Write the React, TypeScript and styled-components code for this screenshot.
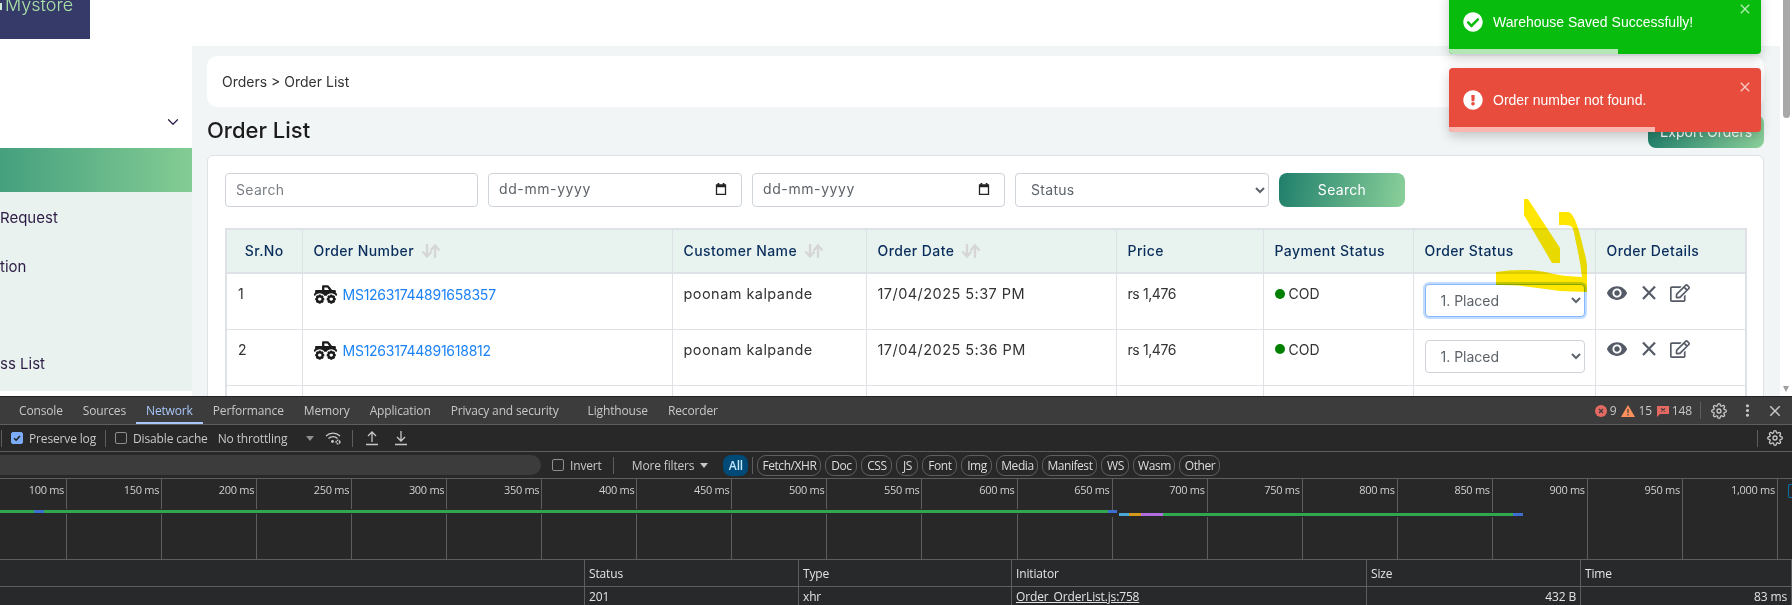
import styled, { createGlobalStyle } from 'styled-components';
import { FaRegEdit, FaTruckMonster, FaCheckCircle, FaExclamationCircle } from 'react-icons/fa';
import { FiChevronDown, FiSettings } from 'react-icons/fi';
import { MdClose, MdRemoveRedEye, MdMoreVert } from 'react-icons/md';

const GlobalStyle = createGlobalStyle`
	html, body {
		margin: 0;
		padding: 0;
		height: 605px;
		overflow: hidden;
		background: #fff;
		font-family: 'Inter', 'Noto Sans', sans-serif;
	}
	* {
		box-sizing: border-box;
	}
`;

const tickLabels = ['100 ms', '150 ms', '200 ms', '250 ms', '300 ms', '350 ms', '400 ms', '450 ms', '500 ms', '550 ms', '600 ms', '650 ms', '700 ms', '750 ms', '800 ms', '850 ms', '900 ms', '950 ms', '1,000 ms'];
const filterPills = [
	{ label: 'Fetch/XHR', width: 64 },
	{ label: 'Doc', width: 32 },
	{ label: 'CSS', width: 31 },
	{ label: 'JS', width: 22 },
	{ label: 'Font', width: 35 },
	{ label: 'Img', width: 31 },
	{ label: 'Media', width: 42 },
	{ label: 'Manifest', width: 55 },
	{ label: 'WS', width: 28 },
	{ label: 'Wasm', width: 42 },
	{ label: 'Other', width: 41 },
];
const tabs = ['Console', 'Sources', 'Network', 'Performance', 'Memory', 'Application', 'Privacy and security', 'Lighthouse', 'Recorder'];

const orders = [
	{ no: 1, number: 'MS12631744891658357', date: '17/04/2025 5:37 PM', focused: true },
	{ no: 2, number: 'MS12631744891618812', date: '17/04/2025 5:36 PM', focused: false },
	{ no: 3, number: '', date: '', focused: false },
];

const SortArrows = () => (
	<SortIcon viewBox="0 0 20 14" width="20" height="14" fill="none" stroke="#d6d6d6" strokeWidth="2.300">
		<path d="M6 0v12M1.500 7.500 6 12.500l4.500-5" />
		<path d="M14 14V2M9.500 6.500 14 1.500l4.500 5" />
	</SortIcon>
);

const CalendarIcon = () => (
	<svg viewBox="0 0 14 14" width="12" height="12" fill="#222">
		<path d="M3 0h2v1.500h4V0h2v1.500h2V14H1V1.500h2zM2.500 5v7.500h9V5z" />
	</svg>
);

const GearIcon = () => <FiSettings size={16} />;

const App = () => {
	return (
		<Page>
			<GlobalStyle />
			<Viewport>
				<Site>
					<Header>
						<Logo>
							<LogoMark />
							<LogoText>Mystore</LogoText>
						</Logo>
					</Header>
					<Body>
						<Sidebar>
							<ParentItem>
								<FiChevronDown size={18} strokeWidth={1.6} />
							</ParentItem>
							<ActiveItem />
							<SubMenu>
								<SubItem>Request</SubItem>
								<SubItem>tion</SubItem>
								<SubItem />
								<SubItem>ss List</SubItem>
							</SubMenu>
						</Sidebar>
						<Main>
							<Breadcrumb>Orders &gt; Order List</Breadcrumb>
							<TitleRow>
								<Title>Order List</Title>
								<ExportButton>Export Orders</ExportButton>
							</TitleRow>
							<Card>
								<Filters>
									<SearchInput placeholder="Search" />
									<DateField>
										dd-mm-yyyy
										<CalendarIcon />
									</DateField>
									<DateField>
										dd-mm-yyyy
										<CalendarIcon />
									</DateField>
									<StatusSelect defaultValue="Status">
										<option>Status</option>
									</StatusSelect>
									<SearchButton>Search</SearchButton>
								</Filters>
								<Table>
									<colgroup>
										<col width="76" />
										<col width="370" />
										<col width="194" />
										<col width="250" />
										<col width="147" />
										<col width="150" />
										<col width="182" />
										<col width="151" />
									</colgroup>
									<thead>
										<tr>
											<HeadCell $center>Sr.No</HeadCell>
											<HeadCell>Order Number<SortArrows /></HeadCell>
											<HeadCell>Customer Name<SortArrows /></HeadCell>
											<HeadCell>Order Date<SortArrows /></HeadCell>
											<HeadCell>Price</HeadCell>
											<HeadCell>Payment Status</HeadCell>
											<HeadCell>Order Status</HeadCell>
											<HeadCell>Order Details</HeadCell>
										</tr>
									</thead>
									<tbody>
										{orders.map((order) => (
											<tr key={order.no}>
												<Cell>{order.number && order.no}</Cell>
												<Cell>
													{order.number && (
														<OrderLink>
															<FaTruckMonster size={23} color="#1b1b1b" />
															{order.number}
														</OrderLink>
													)}
												</Cell>
												<TextCell>{order.number && 'poonam kalpande'}</TextCell>
												<TextCell>{order.date}</TextCell>
												<Cell $spacing={-0.4}>{order.number && 'rs 1,476'}</Cell>
												<Cell>
													{order.number && (
														<Payment>
															<Dot />
															COD
														</Payment>
													)}
												</Cell>
												<SelectCell>
													<RowSelect $focused={order.focused} defaultValue="1. Placed">
														<option>1. Placed</option>
													</RowSelect>
												</SelectCell>
												<Cell>
													{order.number && (
														<Actions>
															<MdRemoveRedEye size={22} />
															<svg viewBox="0 0 22 22" width="22" height="22" fill="none" stroke="currentColor" strokeWidth="2.200">
																<path d="M5 4.500l12 12.500M17 4.500 5 17" />
															</svg>
															<FaRegEdit size={20} />
														</Actions>
													)}
												</Cell>
											</tr>
										))}
									</tbody>
								</Table>
							</Card>
						</Main>
					</Body>
				</Site>
				<PageScrollbar>
					<ScrollThumb />
					<ScrollArrow />
				</PageScrollbar>
				<Marker viewBox="0 0 1792 396" width="1792" height="396">
					<path d="M1524 199h4l32 49v15h-8l-28-48z" />
					<path d="M1496 272C1510 270 1520 270 1530 270C1545 271 1555 275 1567 276L1582 277C1581 267 1579 257 1577 247C1575 238 1574 230 1572 227C1570 225 1565 225 1559 225L1559 212L1568 212C1571 212 1573 216 1575 220C1578 227 1581 237 1583 247C1585 254 1587 262 1587 267L1587 292L1560 291L1530 287C1518 285 1506 285 1496 285Z" />
				</Marker>
				<Toasts>
					<Toast $color="#07bc0c">
						<FaCheckCircle size={20} />
						Warehouse Saved Successfully!
						<ToastClose><MdClose size={16} /></ToastClose>
						<ToastProgress $color="#b5e6b6" $width={169} />
					</Toast>
					<Toast $color="#e74c3c">
						<FaExclamationCircle size={20} />
						Order number not found.
						<ToastClose><MdClose size={16} /></ToastClose>
						<ToastProgress $color="#f8b7b1" $width={206} />
					</Toast>
				</Toasts>
			</Viewport>
			<DevTools>
				<TabBar>
					{tabs.map((tab) => (
						<Tab key={tab} $active={tab === 'Network'}>{tab}</Tab>
					))}
					<TabBarRight>
						<Counters>
							<Counter>
								<svg viewBox="0 0 12 12" width="12" height="12">
									<circle cx="6" cy="6" r="6" fill="#e46962" />
									<path d="M4 4l4 4M8 4l-4 4" stroke="#3c3c3c" strokeWidth="1.300" />
								</svg>
								9
							</Counter>
							<Counter>
								<svg viewBox="0 0 14 12" width="14" height="12">
									<path d="M7 0l7 12H0z" fill="#ff8f5c" />
									<path d="M7 4v4M7 9v1.500" stroke="#3c3c3c" strokeWidth="1.200" />
								</svg>
								15
							</Counter>
							<Counter>
								<svg viewBox="0 0 12 12" width="12" height="12">
									<path d="M0 1h12v8H3l-3 3z" fill="#e46962" />
									<path d="M4 3.500l4 3M8 3.500l-4 3" stroke="#3c3c3c" strokeWidth="1.100" />
								</svg>
								148
							</Counter>
						</Counters>
						<BarSeparator />
						<ToolIcon><GearIcon /></ToolIcon>
						<ToolIcon><MdMoreVert size={19} /></ToolIcon>
						<ToolIcon><MdClose size={18} /></ToolIcon>
					</TabBarRight>
				</TabBar>
				<Toolbar>
					<BarSeparator />
					<CheckRow>
						<Checkbox $checked>
							<svg viewBox="0 0 12 12" width="12" height="12" fill="none" stroke="#1f1f1f" strokeWidth="1.800">
								<path d="M2.500 6.200l2.500 2.500 4.500-5.200" />
							</svg>
						</Checkbox>
						Preserve log
					</CheckRow>
					<BarSeparator />
					<CheckRow>
						<Checkbox />
						Disable cache
					</CheckRow>
					<Throttle>No throttling</Throttle>
					<Caret />
					<ToolIcon>
						<svg viewBox="0 0 17 14" width="17" height="14" fill="none" stroke="currentColor" strokeWidth="1.300">
							<path d="M1 5a10 10 0 0 1 14 0" />
							<path d="M3.500 7.500a6.500 6.500 0 0 1 9 0" />
							<circle cx="7.500" cy="10.500" r="0.800" fill="currentColor" />
							<circle cx="13" cy="11" r="1.800" strokeWidth="1.600" strokeDasharray="1.500 0.700" />
						</svg>
					</ToolIcon>
					<BarSeparator />
					<ToolIcon>
						<svg viewBox="0 0 16 16" width="16" height="16" fill="none" stroke="currentColor" strokeWidth="1.300">
							<path d="M8 2v10M4 6l4-4 4 4M2 14.500h12" />
						</svg>
					</ToolIcon>
					<ToolIcon>
						<svg viewBox="0 0 16 16" width="16" height="16" fill="none" stroke="currentColor" strokeWidth="1.300">
							<path d="M8 1v10M4 7l4 4 4-4M2 14.500h12" />
						</svg>
					</ToolIcon>
					<ToolbarEnd>
						<BarSeparator />
						<ToolIcon><GearIcon /></ToolIcon>
					</ToolbarEnd>
				</Toolbar>
				<FilterBar>
					<FilterInput />
					<CheckRow>
						<Checkbox />
						Invert
					</CheckRow>
					<BarSeparator />
					<MoreFilters>
						More filters
						<FilterCaret />
					</MoreFilters>
					<AllPill>All</AllPill>
					<PillSeparator />
					<Pills>
						{filterPills.map((pill) => (
							<Pill key={pill.label} $width={pill.width}>{pill.label}</Pill>
						))}
					</Pills>
				</FilterBar>
				<Overview>
					<Tick $first />
					{tickLabels.map((label) => (
						<Tick key={label}>{label}</Tick>
					))}
					<Waterfall viewBox="0 0 1792 81" width="1792" height="81">
						<rect x="0" y="30" width="1110" height="5" fill="#282828" />
						<rect x="1110" y="33" width="420" height="5" fill="#282828" />
						<rect x="0" y="31" width="1108" height="3" fill="#2fa84f" />
						<rect x="34" y="31" width="10" height="3" fill="#3d6fd0" />
						<rect x="1108" y="31" width="9" height="3" fill="#3d6fd0" />
						<rect x="1119" y="34" width="10" height="3" fill="#4aa8d8" />
						<rect x="1129" y="34" width="12" height="3" fill="#d49a1c" />
						<rect x="1141" y="34" width="22" height="3" fill="#b06ee0" />
						<rect x="1163" y="34" width="350" height="3" fill="#2fa84f" />
						<rect x="1513" y="34" width="10" height="3" fill="#3d6fd0" />
					</Waterfall>
					<Handle />
				</Overview>
				<NetRow $header>
					<NetCell />
					<NetCell>Status</NetCell>
					<NetCell>Type</NetCell>
					<NetCell>Initiator</NetCell>
					<NetCell>Size</NetCell>
					<NetCell>Time</NetCell>
				</NetRow>
				<NetRow>
					<NetCell />
					<NetCell>201</NetCell>
					<NetCell>xhr</NetCell>
					<NetCell><u>Order_OrderList.js:758</u></NetCell>
					<NetCell $right>432 B</NetCell>
					<NetCell $right>83 ms</NetCell>
				</NetRow>
			</DevTools>
		</Page>
	);
};

const Page = styled.div`
	width: 1792px;
	height: 605px;
	display: flex;
	flex-direction: column;
	overflow: hidden;
`;

const Viewport = styled.div`
	position: relative;
	height: 396px;
	flex-shrink: 0;
	display: flex;
	overflow: hidden;
`;

const Site = styled.div`
	flex: 1;
	min-width: 0;
	display: flex;
	flex-direction: column;
`;

const Header = styled.header`
	height: 46px;
	flex-shrink: 0;
`;

const Logo = styled.div`
	width: 90px;
	height: 39px;
	background: #363a68;
	overflow: hidden;
	display: flex;
	align-items: flex-start;
	gap: 3px;
`;

const LogoMark = styled.span`
	width: 2px;
	height: 7px;
	margin-top: 3px;
	background: #cfe8d8;
`;

const LogoText = styled.div`
	margin-top: -7px;
	font-size: 18px;
	line-height: 24px;
	font-weight: 300;
	color: #a9e2a6;
`;

const Body = styled.div`
	flex: 1;
	display: flex;
	min-height: 0;
`;

const Sidebar = styled.aside`
	width: 192px;
	flex-shrink: 0;
	height: 345px;
	color: #2d1b45;
`;

const ParentItem = styled.div`
	height: 102px;
	padding: 67px 10px 0 0;
	display: flex;
	justify-content: flex-end;
	color: #2d1b45;
`;

const ActiveItem = styled.div`
	height: 44px;
	background: linear-gradient(90deg, #45a07e, #84cc94);
`;

const SubMenu = styled.div`
	height: 199px;
	background: #e9f2ef;
	padding-top: 2px;
`;

const SubItem = styled.div`
	height: 48.5px;
	line-height: 48px;
	font-size: 15px;
`;

const Main = styled.main`
	flex: 1;
	min-width: 0;
	background: #f1f5f5;
	padding: 10px 16px 0 15px;
`;

const Breadcrumb = styled.div`
	height: 51px;
	background: #fff;
	border-radius: 10px;
	padding: 0 0 1px 15px;
	display: flex;
	align-items: center;
	font-size: 14px;
	color: #333;
`;

const TitleRow = styled.div`
	height: 48px;
	display: flex;
	justify-content: space-between;
	align-items: flex-start;
`;

const Title = styled.h1`
	margin: 6px 0 0;
	font-size: 22px;
	line-height: 34px;
	font-weight: 500;
	color: #1c1c1c;
`;

const ExportButton = styled.button`
	margin-top: 8px;
	width: 116px;
	height: 33px;
	border: 0;
	border-radius: 8px;
	background: linear-gradient(100deg, #1f7f6b, #8bd09a);
	color: #fff;
	font: inherit;
	font-size: 14px;
`;

const Card = styled.section`
	background: #fff;
	border: 1px solid #dee2e6;
	border-radius: 6px;
	padding: 17px;
	height: 300px;
`;

const Filters = styled.div`
	display: grid;
	grid-template-columns: 253px 254px 253px 254px 126px;
	gap: 10px;
	height: 34px;
	margin-bottom: 21px;
`;

const SearchInput = styled.input`
	border: 1px solid #ced4da;
	border-radius: 4px;
	padding: 0 10px 2px;
	font: inherit;
	font-size: 14px;
	letter-spacing: 0.3px;

	&::placeholder {
		color: #7a7f85;
	}
`;

const DateField = styled.div`
	border: 1px solid #ced4da;
	border-radius: 4px;
	padding: 0 14px 3px 10px;
	display: flex;
	align-items: center;
	justify-content: space-between;
	font-size: 14px;
	letter-spacing: 0.6px;
	color: #5c636a;
`;

const StatusSelect = styled.select`
	border: 1px solid #ced4da;
	border-radius: 4px;
	padding: 0 11px 2px;
	background: #fff;
	font: inherit;
	font-size: 14px;
	letter-spacing: 0.3px;
	color: #5c636a;
`;

const SearchButton = styled.button`
	border: 0;
	border-radius: 8px;
	background: linear-gradient(100deg, #1f7f6b, #8bd09a);
	color: #fff;
	font: inherit;
	font-size: 14px;
	letter-spacing: 0.3px;
	padding-bottom: 2px;
`;

const Table = styled.table`
	width: 1520px;
	table-layout: fixed;
	border-collapse: collapse;
	border: 2px solid #dee2e6;
	font-size: 14px;
	color: #333;
`;

const HeadCell = styled.th<{ $center?: boolean }>`
	height: 44px;
	padding: 0 11px 2px;
	background: #e8f2ef;
	border: 1px solid #dee2e6;
	border-bottom: 2px solid #dee2e6;
	text-align: ${(props) => (props.$center ? 'center' : 'left')};
	font-weight: 500;
	letter-spacing: 0.4px;
	color: #0a2e5c;
	white-space: nowrap;
`;

const SortIcon = styled.svg`
	margin-left: 7px;
	vertical-align: -2px;
`;

const Cell = styled.td<{ $spacing?: number }>`
	height: 56px;
	padding: 9px 11px 0;
	vertical-align: top;
	border: 1px solid #dee2e6;
	line-height: 21px;
	letter-spacing: ${(props) => props.$spacing ?? 0}px;
`;

const TextCell = styled(Cell)`
	font-size: 14.5px;
	letter-spacing: 0.45px;
`;

const SelectCell = styled(Cell)`
	padding-top: 10px;
`;

const OrderLink = styled.a`
	display: flex;
	align-items: center;
	gap: 6px;
	letter-spacing: -0.25px;
	color: #1b82f6;
`;

const Payment = styled.div`
	display: flex;
	align-items: center;
	gap: 4px;
`;

const Dot = styled.span`
	width: 10px;
	height: 10px;
	border-radius: 50%;
	background: #008000;
`;

const RowSelect = styled.select<{ $focused: boolean }>`
	display: block;
	width: 160px;
	height: 33px;
	padding: 0 11px;
	background: #fff;
	border: 1px solid ${(props) => (props.$focused ? '#86b7fe' : '#ced4da')};
	border-radius: 4px;
	box-shadow: ${(props) => (props.$focused ? '0 0 0 2px rgba(13, 110, 253, 0.25)' : 'none')};
	font: inherit;
	font-size: 14px;
	color: #5c636a;
`;

const Actions = styled.div`
	display: flex;
	align-items: center;
	gap: 10px;
	color: #555b66;
	margin: -1px 0 0 -1px;
`;

const PageScrollbar = styled.div`
	width: 12px;
	flex-shrink: 0;
	background: #fff;
	padding: 0 2px 0 3px;
	display: flex;
	flex-direction: column;
	justify-content: space-between;
`;

const ScrollThumb = styled.div`
	height: 118px;
	background: #a8a8a8;
	border-radius: 0 0 4px 4px;
`;

const ScrollArrow = styled.div`
	width: 0;
	height: 0;
	margin: 0 0 4px 0;
	border-left: 3.500px solid transparent;
	border-right: 3.500px solid transparent;
	border-top: 6px solid #a0a0a0;
`;

const Toasts = styled.div`
	position: absolute;
	top: -10px;
	left: 1449px;
	width: 312px;
	display: flex;
	flex-direction: column;
	gap: 14px;
`;

const Toast = styled.div<{ $color: string }>`
	position: relative;
	height: 64px;
	padding: 0 14px;
	background: ${(props) => props.$color};
	border-radius: 4px;
	box-shadow: 0 4px 12px rgba(0, 0, 0, 0.2);
	display: flex;
	align-items: center;
	gap: 10px;
	color: #fff;
	font-family: 'Liberation Sans', sans-serif;
	font-size: 14px;
	overflow: hidden;
`;

const ToastClose = styled.span`
	position: absolute;
	top: 11px;
	right: 8px;
	display: flex;
	opacity: 0.7;
`;

const ToastProgress = styled.div<{ $color: string; $width: number }>`
	position: absolute;
	left: 0;
	bottom: 0;
	height: 5px;
	width: ${(props) => props.$width}px;
	background: ${(props) => props.$color};
`;

const Marker = styled.svg`
	position: absolute;
	left: 0;
	top: 0;
	fill: #ffe600;
	mix-blend-mode: multiply;
	pointer-events: none;
`;

const DevTools = styled.div`
	flex: 1;
	display: flex;
	flex-direction: column;
	background: #282828;
	color: #e3e3e3;
	font-family: 'Open Sans', 'Noto Sans', sans-serif;
	font-size: 12px;
	letter-spacing: -0.15px;
	border-top: 1px solid #202124;
`;

const TabBar = styled.div`
	height: 28px;
	flex-shrink: 0;
	padding-left: 9px;
	background: #3c3c3c;
	border-bottom: 1px solid #5e5e5e;
	display: flex;
	align-items: stretch;
`;

const Tab = styled.div<{ $active?: boolean }>`
	padding: 0 10px;
	display: flex;
	align-items: center;
	color: ${(props) => (props.$active ? '#a8c7fa' : '#c7c7c7')};
	box-shadow: ${(props) => (props.$active ? 'inset 0 -2px 0 #a8c7fa' : 'none')};

	&:nth-child(8) {
		margin-left: 9px;
	}
`;

const TabBarRight = styled.div`
	margin-left: auto;
	display: flex;
	align-items: center;
	gap: 8px;
	padding-right: 7px;
`;

const Counters = styled.div`
	display: flex;
	align-items: center;
	gap: 5px;
`;

const Counter = styled.span`
	display: flex;
	align-items: center;
	gap: 3px;
	font-size: 12px;
	color: #c7c7c7;
`;

const BarSeparator = styled.span`
	width: 1px;
	height: 17px;
	flex-shrink: 0;
	background: #5e5e5e;
`;

const ToolIcon = styled.span`
	display: flex;
	width: 20px;
	justify-content: center;
	color: #c7c7c7;
`;

const Toolbar = styled.div`
	height: 27px;
	flex-shrink: 0;
	padding-left: 1px;
	border-bottom: 1px solid #5e5e5e;
	display: flex;
	align-items: center;
	gap: 9px;
`;

const ToolbarEnd = styled.div`
	margin-left: auto;
	display: flex;
	align-items: center;
	gap: 7px;
	padding-right: 7px;
`;

const CheckRow = styled.label`
	display: flex;
	align-items: center;
	gap: 6px;
	color: #c7c7c7;
	white-space: nowrap;
`;

const Checkbox = styled.span<{ $checked?: boolean }>`
	width: 12px;
	height: 12px;
	border-radius: 2px;
	border: 1px solid ${(props) => (props.$checked ? '#7cacf8' : '#8e8e8e')};
	background: ${(props) => (props.$checked ? '#7cacf8' : 'transparent')};
	display: flex;
	align-items: center;
	justify-content: center;
`;

const Throttle = styled.span`
	margin-left: 1px;
	color: #c7c7c7;
	white-space: nowrap;
`;

const Caret = styled.span`
	width: 0;
	height: 0;
	margin-left: 10px;
	border-left: 4px solid transparent;
	border-right: 4px solid transparent;
	border-top: 5px solid #8e8e8e;
`;

const FilterCaret = styled(Caret)`
	margin-left: 6px;
	border-top-color: #c7c7c7;
`;

const FilterBar = styled.div`
	height: 27px;
	flex-shrink: 0;
	border-bottom: 1px solid #5e5e5e;
	display: flex;
	align-items: center;
	gap: 11px;
`;

const FilterInput = styled.div`
	width: 541px;
	height: 20px;
	background: #3c3c3c;
	border-radius: 0 10px 10px 0;
`;

const MoreFilters = styled.span`
	margin-left: 7px;
	display: flex;
	align-items: center;
	color: #c7c7c7;
`;

const AllPill = styled.span`
	width: 25px;
	height: 21px;
	border-radius: 8px;
	background: #004a77;
	color: #c2e7ff;
	font-weight: 600;
	display: flex;
	align-items: center;
	justify-content: center;
	margin-left: 4px;
`;

const PillSeparator = styled(BarSeparator)`
	margin-left: -7px;
`;

const Pills = styled.div`
	display: flex;
	gap: 4px;
	margin-left: -7px;
`;

const Pill = styled.span<{ $width: number }>`
	width: ${(props) => props.$width}px;
	height: 21px;
	border: 1px solid #5e5e5e;
	border-radius: 9px;
	display: flex;
	align-items: center;
	justify-content: center;
	letter-spacing: -0.45px;
	color: #dcdcdc;
`;

const Overview = styled.div`
	position: relative;
	height: 81px;
	flex-shrink: 0;
	border-bottom: 1px solid #5e5e5e;
	display: flex;
	overflow: hidden;
`;

const Tick = styled.div<{ $first?: boolean }>`
	flex: 0 0 ${(props) => (props.$first ? '0' : '95.050px')};
	margin-left: ${(props) => (props.$first ? '-31px' : '0')};
	border-right: 1px solid #5e5e5e;
	padding: 3px 2px 0 0;
	text-align: right;
	font-size: 11px;
	letter-spacing: -0.3px;
	color: #d0d0d0;
	white-space: nowrap;
`;

const Waterfall = styled.svg`
	position: absolute;
	left: 0;
	top: 0;
`;

const Handle = styled.span`
	position: absolute;
	right: 0;
	top: 5px;
	width: 4px;
	height: 14px;
	border: 1px solid #0b6fa8;
	border-right: 0;
	border-radius: 2px 0 0 2px;
`;

const NetRow = styled.div<{ $header?: boolean }>`
	height: ${(props) => (props.$header ? '27px' : '19px')};
	flex-shrink: 0;
	display: grid;
	grid-template-columns: 585px 214px 213px 355px 214px 211px;
	background: #28292b;
	border-bottom: ${(props) => (props.$header ? '1px solid #5e5e5e' : '0')};
`;

const NetCell = styled.div<{ $right?: boolean }>`
	padding: 0 4px;
	border-right: 1px solid #5e5e5e;
	display: flex;
	align-items: center;
	justify-content: ${(props) => (props.$right ? 'flex-end' : 'flex-start')};
	color: #e3e3e3;
`;

export default App;
